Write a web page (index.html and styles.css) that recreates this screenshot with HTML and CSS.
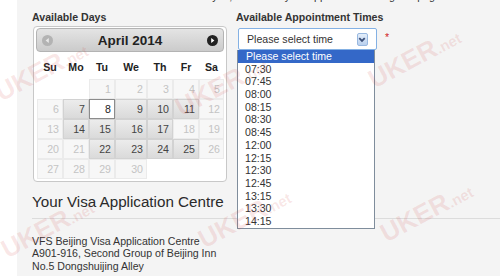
FILE: index.html
```html
<!DOCTYPE html>
<html lang="en">
<head>
    <meta charset="UTF-8">
    <meta name="viewport" content="width=device-width, initial-scale=1.0">
    <title>Book Appointment</title>
    <link rel="stylesheet" href="styles.css">
</head>
<body>
    <div class="page">
        <p class="intro">Select the date and the time that suits you, then book your appointment using this page.</p>

        <div class="booking">
            <div class="days">
                <div class="label">Available Days</div>
                <div class="calendar">
                    <div class="cal-head">
                        <svg class="nav" width="11" height="11" viewBox="0 0 11 11">
                            <circle cx="5.5" cy="5.5" r="5.5" fill="#b3b3b3"/>
                            <path d="M6.8 3 L3.6 5.5 L6.8 8 Z" fill="#e8e8e8"/>
                        </svg>
                        <span class="cal-title">April 2014</span>
                        <svg class="nav" width="11" height="11" viewBox="0 0 11 11">
                            <circle cx="5.5" cy="5.5" r="5.5" fill="#222"/>
                            <path d="M4.2 3 L7.4 5.5 L4.2 8 Z" fill="#fff"/>
                        </svg>
                    </div>
                    <table class="cal-grid">
                        <colgroup>
                            <col style="width:26px"><col style="width:26px"><col style="width:26px">
                            <col style="width:32px"><col style="width:26px"><col style="width:26px">
                            <col style="width:25px">
                        </colgroup>
                        <thead>
                            <tr><th>Su</th><th>Mo</th><th>Tu</th><th>We</th><th>Th</th><th>Fr</th><th>Sa</th></tr>
                        </thead>
                        <tbody>
                            <tr>
                                <td></td><td></td>
                                <td class="off">1</td><td class="off">2</td><td class="off">3</td><td class="off">4</td><td class="off">5</td>
                            </tr>
                            <tr>
                                <td class="off">6</td><td class="on">7</td><td class="today">8</td><td class="on">9</td>
                                <td class="on">10</td><td class="on">11</td><td class="off">12</td>
                            </tr>
                            <tr>
                                <td class="off">13</td><td class="on">14</td><td class="on">15</td><td class="on">16</td>
                                <td class="on">17</td><td class="off">18</td><td class="off">19</td>
                            </tr>
                            <tr>
                                <td class="off">20</td><td class="off">21</td><td class="on">22</td><td class="on">23</td>
                                <td class="on">24</td><td class="on">25</td><td class="off">26</td>
                            </tr>
                            <tr>
                                <td class="off">27</td><td class="off">28</td><td class="off">29</td><td class="off">30</td>
                                <td></td><td></td><td></td>
                            </tr>
                        </tbody>
                    </table>
                </div>
            </div>

            <div class="times">
                <div class="label">Available Appointment Times</div>
                <div class="select-row">
                    <div class="select">
                        <span>Please select time</span>
                        <span class="arrow">
                            <svg width="11" height="13" viewBox="0 0 11 13">
                                <path d="M2.5 5 L5.5 8 L8.5 5" fill="none" stroke="#3b4f78" stroke-width="2"/>
                            </svg>
                        </span>
                        <ul class="options">
                            <li class="sel">Please select time</li>
                            <li>07:30</li>
                            <li>07:45</li>
                            <li>08:00</li>
                            <li>08:15</li>
                            <li>08:30</li>
                            <li>08:45</li>
                            <li>12:00</li>
                            <li>12:15</li>
                            <li>12:30</li>
                            <li>12:45</li>
                            <li>13:15</li>
                            <li>13:30</li>
                            <li>14:15</li>
                        </ul>
                    </div>
                    <span class="req">*</span>
                </div>
            </div>
        </div>

        <h2 class="centre-title">Your Visa Application Centre</h2>
        <p class="address">
            VFS Beijing Visa Application Centre<br>
            A901-916, Second Group of Beijing Inn<br>
            No.5 Dongshuijing Alley
        </p>
    </div>

    <!-- watermark stamps -->
    <div class="wm" style="left:-8px;top:55px">UKER<small>.net</small></div>
    <div class="wm" style="left:172px;top:70px">UKER<small>.net</small></div>
    <div class="wm" style="left:365px;top:42px">UKER<small>.net</small></div>
    <div class="wm" style="left:-2px;top:212px">UKER<small>.net</small></div>
    <div class="wm" style="left:195px;top:202px">UKER<small>.net</small></div>
    <div class="wm" style="left:377px;top:196px">UKER<small>.net</small></div>
</body>
</html>
```

FILE: styles.css
```css
body {
    margin: 0;
    background-color: #fff;
    font-family: "Liberation Sans", Arial, sans-serif;
    color: #333;
    height: 276px;
    overflow: hidden;
    position: relative;
}

.page {
    margin-left: 17px;
    padding-left: 15px;
    background-color: #f4f4f4;
    min-height: 276px;
    overflow: hidden;
}

.intro {
    margin: -10px 0 8px;
    font-size: 10.6px;
    line-height: 13px;
    white-space: nowrap;
}

.booking {
    display: flex;
}

.days {
    width: 204px;
}

.label {
    font-size: 10.6px;
    line-height: 13px;
    font-weight: bold;
    color: #333;
}

/* calendar */
.calendar {
    margin: 2px 0 0 1px;
    width: 194px;
    box-sizing: border-box;
    border: 1px solid #c8c8c8;
    border-radius: 4px;
    background-color: #fff;
    padding: 1px 2px 2px;
}

.cal-head {
    height: 24px;
    box-sizing: border-box;
    border: 1px solid #b3b3b3;
    border-radius: 4px;
    background: linear-gradient(#e4e4e4, #cbcbcb);
    display: flex;
    align-items: center;
    justify-content: space-between;
    padding: 0 5px;
}

.cal-title {
    font-size: 13.5px;
    font-weight: bold;
    color: #222;
}

.cal-grid {
    margin: 3px 0 0 1px;
    width: 187px;
    table-layout: fixed;
    border-collapse: separate;
    border-spacing: 0;
}

.cal-grid th {
    height: 24px;
    padding: 0;
    font-size: 10.6px;
    font-weight: bold;
    color: #222;
    text-align: center;
}

.cal-grid tbody tr {
    height: 20px;
}

.cal-grid td {
    padding: 0 3px 0 0;
    font-size: 10.6px;
    line-height: 16px;
    text-align: right;
    border: 1px solid transparent;
}

.cal-grid td.off {
    background-color: #f7f7f7;
    border-color: #ebebeb;
    color: #c4c4c4;
}

.cal-grid td.on {
    background: linear-gradient(#ececec, #dadada);
    border-color: #d2d2d2;
    color: #444;
}

.cal-grid td.today {
    background-color: #fff;
    border-color: #8c8c8c;
    color: #222;
}

/* time select */
.select-row {
    display: flex;
    align-items: flex-start;
    gap: 8px;
    margin: 4px 0 0 2px;
}

.select {
    position: relative;
    width: 139px;
    height: 22px;
    box-sizing: border-box;
    border: 1px solid #84b1e4;
    border-radius: 2px;
    background-color: #fff;
    display: flex;
    align-items: center;
    justify-content: space-between;
    padding: 0 8px;
    font-size: 10.6px;
    color: #333;
}

.arrow {
    display: flex;
    width: 11px;
    height: 13px;
    box-sizing: border-box;
    border: 1px solid #98b8e0;
    border-radius: 2px;
    background: linear-gradient(#e4eefa, #b9d0ee);
}

.arrow svg {
    margin: -1px 0 0 -1px;
}

.req {
    margin-top: 3px;
    font-size: 10.6px;
    color: #d02020;
}

.options {
    position: absolute;
    left: -2px;
    top: 21px;
    width: 138px;
    box-sizing: border-box;
    margin: 0;
    padding: 0;
    list-style: none;
    background-color: #fff;
    border: 1px solid #7f8d9c;
    border-top: none;
    z-index: 2;
}

.options li {
    height: 12.7px;
    line-height: 12.7px;
    padding-left: 7px;
    font-size: 10.6px;
    color: #333;
}

.options li.sel {
    background-color: #3468c8;
    color: #fff;
    padding-left: 8px;
}

/* centre info */
.centre-title {
    margin: 11px 0 0;
    padding-bottom: 7px;
    border-bottom: 1px solid #dcdcdc;
    font-size: 15.2px;
    line-height: 18px;
    font-weight: normal;
    color: #2a2a2a;
}

.address {
    margin: 16px 0 0;
    font-size: 10.6px;
    line-height: 12.3px;
    color: #333;
}

.wm {
    position: absolute;
    z-index: 5;
    font-size: 26px;
    font-weight: bold;
    line-height: 30px;
    white-space: nowrap;
    color: rgba(208, 64, 64, 0.13);
    transform: rotate(-28deg);
    pointer-events: none;
}

.wm small {
    font-size: 15px;
}
```
